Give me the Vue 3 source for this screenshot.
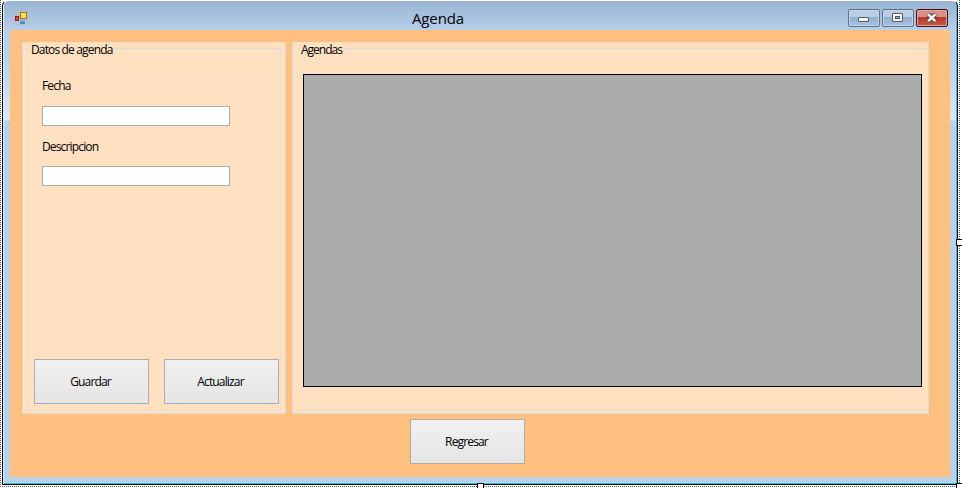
<script setup>
const fields = ['Fecha', 'Descripcion']
const actions = ['Guardar', 'Actualizar']
</script>

<template>
  <div class="designer">
    <div class="window">
      <header class="titlebar">
        <svg class="app-icon" width="14" height="14" viewBox="0 0 14 14">
          <path d="M.5 4V.5H13.5V13.5H.5V4M5.500 0V13M0 4.500H5M0 9.500H13" fill="none" stroke="#b9b9b9" stroke-width="1" opacity=".7" />
          <rect x="1.500" y="5.500" width="3" height="4" fill="#d8483a" stroke="#9c1a12" stroke-width="1" />
          <rect x="6.500" y="1.500" width="6" height="6" fill="#ffdc58" stroke="#a87800" />
          <rect x="6" y="9" width="5" height="4" fill="#4d86dc" />
          <path d="M6 10H11" stroke="#9cc4fa" />
        </svg>
        <h1>Agenda</h1>
        <div class="controls">
          <span class="ctl">
            <svg width="30" height="16" viewBox="0 0 30 16"><rect x="9.500" y="7.500" width="10" height="4" rx=".5" fill="#f6f6f6" stroke="#545b68" /></svg>
          </span>
          <span class="ctl">
            <svg width="30" height="16" viewBox="0 0 30 16"><rect x="9.500" y="3.500" width="10" height="8" rx=".5" fill="#f6f6f6" stroke="#545b68" /><rect x="12.500" y="6.500" width="4" height="2" fill="#91afcf" stroke="#545b68" /></svg>
          </span>
          <span class="ctl close">
            <svg width="30" height="16" viewBox="0 0 30 16"><path d="M11.200 4.300L18.300 11.200M18.300 4.300L11.200 11.200" stroke="#584b57" stroke-width="4.800" /><path d="M11.200 4.300L18.300 11.200M18.300 4.300L11.200 11.200" stroke="#fafafa" stroke-width="2.400" /></svg>
          </span>
        </div>
      </header>
      <main class="form">
        <div class="groups">
          <section class="group data">
            <h2>Datos de agenda</h2>
            <label v-for="f in fields" :key="f" class="field"><span>{{ f }}</span><input type="text" /></label>
            <div class="actions">
              <button v-for="a in actions" :key="a">{{ a }}</button>
            </div>
          </section>
          <section class="group list">
            <h2>Agendas</h2>
            <div class="grid"></div>
          </section>
        </div>
        <button class="back">Regresar</button>
      </main>
    </div>
    <i class="handle right"></i>
    <i class="handle bottom"></i>
    <i class="handle corner"></i>
  </div>
</template>

<style>
body { background: #fff; overflow: hidden; }
</style>

<style scoped>
* { box-sizing: border-box; }
.designer {
  position: relative;
  width: 962px;
  height: 488px;
  padding: 0 4px 3px 2px;
  overflow: hidden;
  font: 12px/16px "Open Sans", sans-serif;
  color: #000;
  background:
    repeating-linear-gradient(180deg, #555 0 1px, #fff 1px 2px) 0 0 / 1px 100% no-repeat,
    repeating-linear-gradient(180deg, #555 0 1px, #fff 1px 2px) 959px 0 / 1px 100% no-repeat,
    repeating-linear-gradient(90deg, #555 0 1px, #fff 1px 2px) 0 486px / 100% 1px no-repeat,
    #fff;
}
.window {
  width: 956px;
  height: 485px;
  padding: 0 6px 6px 7px;
  border: 1px solid #000;
  border-top-color: #fff;
  border-radius: 6px 6px 0 0;
  box-shadow: inset 1px 0 #e4eef8, inset -1px -1px #35c3dd;
  background:
    linear-gradient(#98b4d2 0, #b6cfea 29px, #b9d1ea 60px, #dce8f5 119px, #b9d1ea 120px);
}
.titlebar {
  display: flex;
  height: 29px;
  padding: 10px 3px 0 4px;
  justify-content: space-between;
}
h1 {
  margin: -4px 0 0 0;
  font: 15px/22px "Open Sans", sans-serif;
  letter-spacing: -.1px;
}
.controls { display: flex; gap: 2px; margin-top: -2px; }
.ctl {
  width: 32px;
  height: 18px;
  border: 1px solid #5c6f8e;
  border-radius: 2px;
  box-shadow: inset 0 0 0 1px #c4d5e8;
  background: linear-gradient(#b9cce2 0 45%, #91aecd 46%, #a9c3e0);
}
.ctl svg { display: block; }
.close {
  border-color: #49121c;
  box-shadow: inset 0 0 0 1px #dba29b;
  background: linear-gradient(#d99087 0 45%, #b63827 46%, #c95b43);
}
.form {
  display: flex;
  flex-direction: column;
  align-items: flex-start;
  width: 940px;
  height: 447px;
  padding: 12px;
  background: #ffc080;
}
.groups { display: flex; gap: 6px; }
.group {
  display: flex;
  flex-direction: column;
  height: 372px;
  background: linear-gradient(#dcdcdc, #dcdcdc) 0 6px / 100% 1px no-repeat, #ffe0c0;
  border: 1px solid #dcdcdc;
  border-top: 0;
}
.data { width: 264px; padding-left: 11px; }
.list { width: 637px; padding-left: 10px; }
h2 {
  align-self: flex-start;
  height: 16px;
  margin: 0 0 0 -5px;
  padding: 0 2px;
  font: inherit;
  letter-spacing: -.85px;
  background: #ffe0c0;
}
.list h2 { margin-left: -4px; letter-spacing: -1px; }
.field { display: flex; flex-direction: column; gap: 12px; margin: 20px 0 0 8px; letter-spacing: -.85px; }
.field + .field { gap: 11px; margin-top: 13px; }
input { width: 188px; height: 20px; padding: 0 4px; border: 1px solid #abadb3; background: #fff; outline: 0; }
.actions { display: flex; gap: 15px; margin-top: auto; margin-bottom: 9px; }
button {
  width: 115px;
  height: 45px;
  padding: 1px 2px 0 0;
  border: 1px solid #acacac;
  border-radius: 0;
  background: linear-gradient(#f0f0f0, #e5e5e5);
  font: inherit;
  letter-spacing: -.85px;
  color: #000;
}
.back { margin: 5px 0 0 388px; }
.grid { width: 619px; height: 313px; margin-top: 16px; border: 1px solid #000; background: #ababab; }
.handle { position: absolute; width: 7px; height: 7px; border: 1px solid #000; background: #fff; }
.right { left: 956px; top: 239px; }
.bottom { left: 477px; top: 483px; }
.corner { left: 956px; top: 483px; }
</style>
